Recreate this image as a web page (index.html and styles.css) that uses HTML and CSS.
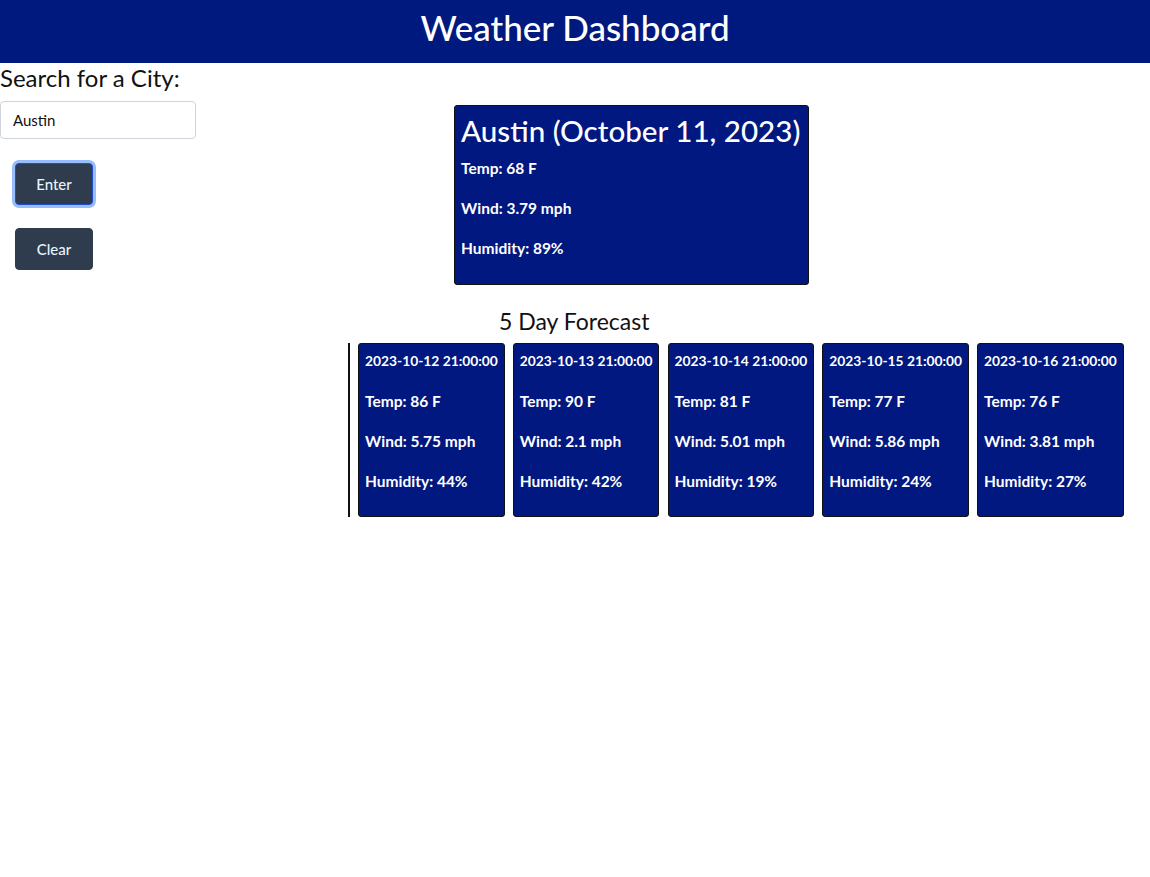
FILE: index.html
```html
<!DOCTYPE html>
<html>
<head>
<meta charset="utf-8">
<link rel="stylesheet" href="styles.css">
</head>
<body>
<header class="header"><h1 class="header-title">Weather Dashboard</h1></header>
<div class="layout">
  <aside class="sidebar">
    <h2 class="search-label">Search for a City:</h2>
    <input class="city-input" type="text" value="Austin">
    <div class="buttons">
      <button class="btn btn-focus">Enter</button>
      <button class="btn">Clear</button>
    </div>
  </aside>
  <main class="main">
    <div class="current-wrap">
      <section class="current-card">
        <h2 class="current-title">Austin (October 11, 2023)</h2>
        <p class="stat">Temp: 68 F</p>
        <p class="stat">Wind: 3.79 mph</p>
        <p class="stat">Humidity: 89%</p>
      </section>
    </div>
    <h3 class="forecast-title">5 Day Forecast</h3>
    <div class="forecast-row">
      <div class="day-card"><p class="stat date">2023-10-12 21:00:00</p><p class="stat">Temp: 86 F</p><p class="stat">Wind: 5.75 mph</p><p class="stat">Humidity: 44%</p></div>
      <div class="day-card"><p class="stat date">2023-10-13 21:00:00</p><p class="stat">Temp: 90 F</p><p class="stat">Wind: 2.1 mph</p><p class="stat">Humidity: 42%</p></div>
      <div class="day-card"><p class="stat date">2023-10-14 21:00:00</p><p class="stat">Temp: 81 F</p><p class="stat">Wind: 5.01 mph</p><p class="stat">Humidity: 19%</p></div>
      <div class="day-card"><p class="stat date">2023-10-15 21:00:00</p><p class="stat">Temp: 77 F</p><p class="stat">Wind: 5.86 mph</p><p class="stat">Humidity: 24%</p></div>
      <div class="day-card"><p class="stat date">2023-10-16 21:00:00</p><p class="stat">Temp: 76 F</p><p class="stat">Wind: 3.81 mph</p><p class="stat">Humidity: 27%</p></div>
    </div>
  </main>
</div>
</body>
</html>
```
FILE: styles.css
```css
* { box-sizing: border-box; }
body {
  margin: 0;
  font-family: Lato, "Open Sans", sans-serif;
  color: #111;
  background: #fff;
}
.header {
  background: #00197f;
  height: 63px;
  display: flex;
  align-items: center;
  justify-content: center;
  padding-bottom: 10px;
}
.header-title {
  margin: 0;
  color: #fff;
  font-size: 35px;
  font-weight: 500;
}
.layout {
  display: flex;
}
.sidebar {
  width: 348px;
  flex-shrink: 0;
  padding-top: 1px;
}
.search-label {
  margin: 0;
  font-size: 24px;
  font-weight: 400;
  line-height: 28px;
}
.city-input {
  display: block;
  margin-top: 9px;
  width: 196px;
  height: 38px;
  border: 1px solid #ced4da;
  border-radius: 4px;
  padding: 0 12px;
  font-family: inherit;
  font-size: 15px;
  color: #111;
}
.buttons {
  display: flex;
  flex-direction: column;
  align-items: flex-start;
  gap: 23px;
  padding-left: 15px;
  margin-top: 24px;
}
.btn {
  width: 78px;
  height: 42px;
  background: #2e3c4d;
  color: #e8f4ff;
  border: 1px solid #2e3c4d;
  border-radius: 4px;
  font-family: inherit;
  font-size: 15px;
  font-weight: 500;
}
.btn-focus {
  border-color: #1d4fd0;
  box-shadow: 0 0 0 3px #98bdfc;
}
.main {
  flex: 1;
  padding-top: 42px;
}
.current-wrap {
  padding-left: 106px;
}
.current-card {
  width: 355px;
  height: 180px;
  background: #00187f;
  border: 1px solid #111;
  border-radius: 3px;
  color: #fff;
  padding: 6px 6px;
}
.current-title {
  margin: 0 0 8px;
  font-size: 29.6px;
  font-weight: 500;
  line-height: 38px;
  white-space: nowrap;
}
.stat {
  margin: 0 0 20px;
  font-size: 15.5px;
  font-weight: 700;
  line-height: 20px;
  white-space: nowrap;
}
.stat.date {
  font-size: 13.8px;
}
.forecast-title {
  margin: 22px 0 8px 151px;
  font-size: 23px;
  font-weight: 400;
  line-height: 28px;
}
.forecast-row {
  display: flex;
  gap: 8.25px;
  border-left: 2px solid #111;
  padding-left: 8px;
  height: 174px;
}
.day-card {
  width: 146.5px;
  height: 174px;
  background: #00187f;
  border: 1px solid #111;
  border-radius: 3px;
  color: #fff;
  padding: 7px 6px;
  overflow: hidden;
}
```
